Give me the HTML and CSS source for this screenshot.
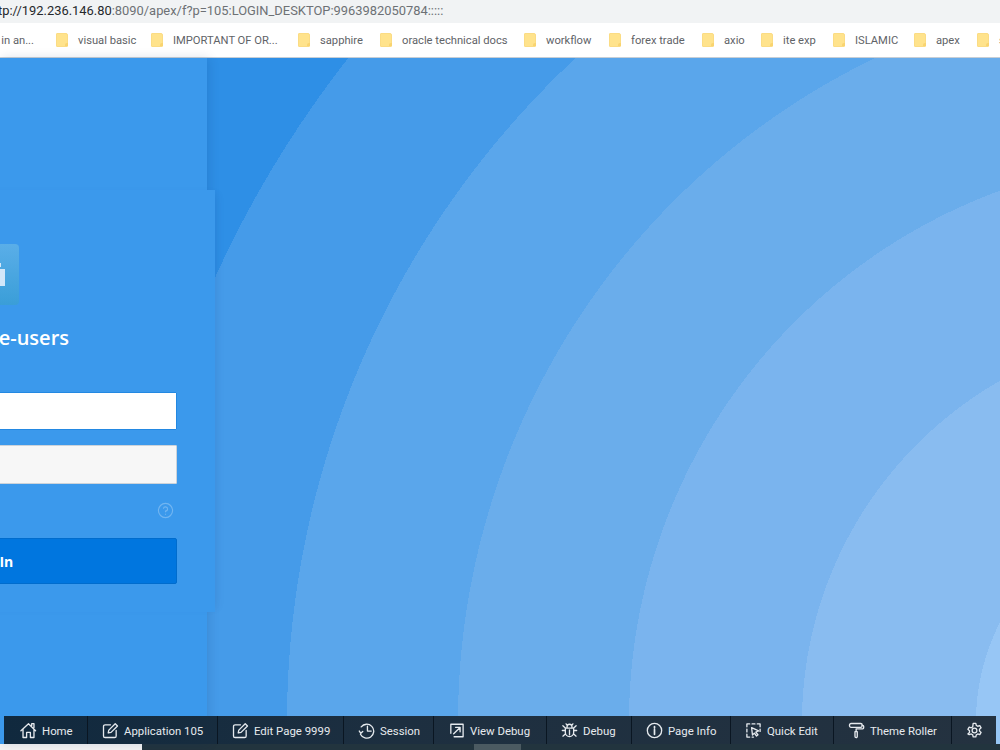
FILE: index.html
```html
<!DOCTYPE html>
<html lang="en">
<head>
<meta charset="utf-8">
<title>Login</title>
<link rel="stylesheet" href="styles.css">
</head>
<body>
<div class="window">
  <div class="address"><span class="addr-text"><span class="host">tp://192.236.146.80</span>:8090/apex/f?p=105:LOGIN_DESKTOP:9963982050784:::::</span></div>
  <nav class="bookmarks">
    <a class="bm bm-first"><span class="bm-label">in an...</span></a>
    <a class="bm"><span class="folder"></span><span class="bm-label">visual basic</span></a>
    <a class="bm"><span class="folder"></span><span class="bm-label">IMPORTANT OF OR...</span></a>
    <a class="bm"><span class="folder"></span><span class="bm-label">sapphire</span></a>
    <a class="bm"><span class="folder"></span><span class="bm-label">oracle technical docs</span></a>
    <a class="bm"><span class="folder"></span><span class="bm-label">workflow</span></a>
    <a class="bm"><span class="folder"></span><span class="bm-label">forex trade</span></a>
    <a class="bm"><span class="folder"></span><span class="bm-label">axio</span></a>
    <a class="bm"><span class="folder"></span><span class="bm-label">ite exp</span></a>
    <a class="bm"><span class="folder"></span><span class="bm-label">ISLAMIC</span></a>
    <a class="bm"><span class="folder"></span><span class="bm-label">apex</span></a>
    <a class="bm"><span class="folder"></span><span class="bm-label">s</span></a>
  </nav>
  <main class="stage">
    <section class="panel">
      <form class="card">
        <div class="tile">
          <svg class="tile-icon" viewBox="0 0 44 24"><path d="M30 0h2v4h-2zM34 0h2v4h-2zM24 6h16v17H24z"/></svg>
        </div>
        <h1 class="title">e-users</h1>
        <input class="field field-active" type="text" aria-label="Username">
        <input class="field field-idle" type="password" aria-label="Password">
        <div class="help-row">
          <svg class="help" viewBox="0 0 18 18"><circle cx="9" cy="9" r="7.5"/><path d="M6.800 7.200A2.200 2.200 0 1 1 9 9.600V10.800M9 12.400V13.600"/></svg>
        </div>
        <button class="signin" type="button">Sign In</button>
      </form>
    </section>
    <div class="devbar">
      <a class="dev">
        <svg class="ico" viewBox="0 0 18 18"><path d="M1 9.200 9 1.800l7.500 7.400M3.200 7.600V16.400H7V11h4v5.400h3.800V7.600M12.400 3.600V1.800h2.400v4"/></svg>
        <span>Home</span></a>
      <a class="dev">
        <svg class="ico" viewBox="0 0 18 18"><path d="M9 3H3.200A1.600 1.600 0 0 0 1.600 4.600v10.200a1.600 1.600 0 0 0 1.600 1.600h10.200a1.600 1.600 0 0 0 1.600-1.600V9M6.600 11.600l.6-3 6.800-6.800 2.400 2.400-6.800 6.800z"/></svg>
        <span>Application 105</span></a>
      <a class="dev">
        <svg class="ico" viewBox="0 0 18 18"><path d="M9 3H3.200A1.600 1.600 0 0 0 1.600 4.600v10.200a1.600 1.600 0 0 0 1.600 1.600h10.200a1.600 1.600 0 0 0 1.600-1.600V9M6.600 11.600l.6-3 6.800-6.800 2.400 2.400-6.800 6.800z"/></svg>
        <span>Edit Page 9999</span></a>
      <a class="dev">
        <svg class="ico" viewBox="0 0 18 18"><path d="M3.400 5.200A7.400 7.400 0 1 1 2.600 13M1.400 9.600l1.600 2.400 2-2M10 4.400v5.200H14"/></svg>
        <span>Session</span></a>
      <a class="dev">
        <svg class="ico" viewBox="0 0 18 18"><path d="M3 12V2.400h13v13.200H6.500M6 12.500 12.500 6M8 5.600h4.800v4.800"/></svg>
        <span>View Debug</span></a>
      <a class="dev">
        <svg class="ico" viewBox="0 0 18 18"><path d="M5.400 6.400h7.200a.8.800 0 0 1 .8.800V11a4.400 4.400 0 0 1-8.800 0V7.200a.8.800 0 0 1 .8-.8zM6.400 6.400V5a2.600 2.600 0 0 1 5.200 0v1.400M9 8.500v5M4.600 9H1.400M13.400 9h3.200M4.800 6.600 2 4M13.200 6.600 16 4M4.800 12.400 2 15M13.200 12.400 16 15M5.400 2l1.400 1.800M12.600 2l-1.400 1.800"/></svg>
        <span>Debug</span></a>
      <a class="dev">
        <svg class="ico" viewBox="0 0 18 18"><circle cx="9" cy="9" r="7.600"/><path class="thick" d="M9 8v5M9 4.800v1.600"/></svg>
        <span>Page Info</span></a>
      <a class="dev">
        <svg class="ico" viewBox="0 0 18 18"><path d="M5 2H2v3M2 7.500v3M2 13v3h3M7.500 2h3M13 2h3v3M16 7.500V10M7.500 16H9"/><path d="M7 6l7.400 3.400-3 1.200 2.400 3-1.600 1.200-2.300-3-2 2z"/></svg>
        <span>Quick Edit</span></a>
      <a class="dev">
        <svg class="ico" viewBox="0 0 18 18"><rect x="1.600" y="1.600" width="13.400" height="4" rx="1.600"/><path d="M15 3.600h.6a1 1 0 0 1 1 1v1.600a1 1 0 0 1-1 1H8.600v3M7.400 10.200h2.400v5.200a1.200 1.200 0 0 1-2.400 0z"/></svg>
        <span>Theme Roller</span></a>
      <a class="dev">
        <svg class="ico" viewBox="0 0 18 18"><circle cx="9" cy="9" r="2.500"/><path d="M7.600 1.400h2.800l.5 2.200 1.500.9 2.200-.7 1.400 2.400-1.700 1.500v1.800l1.700 1.500-1.400 2.400-2.200-.7-1.500.9-.5 2.200H7.600l-.5-2.200-1.500-.9-2.200.7L2 12.600l1.700-1.500V9.300L2 7.800l1.400-2.400 2.200.7 1.500-.9z"/></svg>
      </a>
    </div>
  </main>
  <div class="taskbar"><span class="task-white"></span><span class="task-grey"></span></div>
</div>
</body>
</html>
```
FILE: styles.css
```css
* { box-sizing: border-box; }
html, body { margin: 0; height: 100%; overflow: hidden; }
body { font-family: "Open Sans", "Liberation Sans", sans-serif; }

.window { width: 1000px; height: 750px; display: flex; flex-direction: column; overflow: hidden; }

.address {
  height: 23px; flex: none; padding-top: 1px; background: #f1f3f4; color: #6d7175;
  font: 12.9px/20px Roboto, sans-serif; white-space: nowrap; overflow: hidden;
}
.addr-text { display: block; margin-left: -2px; }
.host { color: #25282b; }

.bookmarks {
  height: 35px; flex: none; background: #fff; border-bottom: 1px solid #c7ced5;
  display: grid; align-items: center;
  grid-template-columns: 56px 95px 147px 82px 144px 85px 93px 59px 72px 81px 63px 30px;
  font: 11.2px/16px Roboto, sans-serif; color: #5f6367; overflow: hidden;
}
.bm { display: flex; align-items: center; gap: 10px; white-space: nowrap; min-width: 0; }
.bm-label { padding-top: 2px; }
.bm-first { width: 34px; justify-content: flex-end; }
.bm-first .bm-label { flex: none; }
.folder {
  position: relative; width: 12px; height: 14px; flex: none;
  background: #ffe38c; border: 1px solid #fbdc84; border-radius: 1px 2px 1px 1px;
}
.folder::after {
  content: ""; position: absolute; right: -1px; bottom: 0; width: 3px; height: 3px;
  border-radius: 2px 0 0 0; background: #f9d470;
}

.stage {
  flex: 1; position: relative; min-height: 0;
  background: radial-gradient(circle at 1195px 664px,
    #97c6f5 0 219px, #89bcf0 219px 393px, #7ab4ee 393px 566px,
    #6aadeb 566px 737px, #5aa6eb 737px 908px, #459be9 908px 1076px, #2e8fe6 1076px);
}
.panel {
  width: 207px; height: 100%; background: #3b99ec;
  display: flex; flex-direction: column; justify-content: center;
  box-shadow: 2px 0 10px rgba(0, 40, 90, .14);
}
.card {
  width: 450px; margin-left: -235px; height: 422px; flex: none;
  padding: 54px 38px 0; background: #3b99ec;
  display: flex; flex-direction: column; align-items: center;
  box-shadow: 6px 0 8px -4px rgba(0, 40, 90, .08);
}
.tile {
  width: 64px; height: 61px; flex: none; border-radius: 4px; margin-left: -6px;
  background: linear-gradient(#5aaee8, #3a9ed8);
  display: flex; align-items: center; justify-content: center;
}
.tile-icon { width: 44px; height: 24px; fill: #d2e7f9; }
.title {
  align-self: flex-end; margin: 18px 108px 0 0; height: 30px;
  font-size: 20px; line-height: 30px; font-weight: 600; color: #fff;
}
.field { width: 100%; flex: none; padding: 0 8px; border-radius: 1px; outline: none; }
.field-active { height: 38px; margin-top: 39px; background: #fff; border: 1px solid #2388e2; }
.field-idle { height: 39px; margin-top: 15px; background: #f7f7f7; border: 1px solid #ccd3da; }
.help-row { width: 100%; margin-top: 18px; height: 16px; display: flex; justify-content: flex-end; padding-right: 3px; }
.help { width: 17px; height: 17px; fill: none; stroke: rgba(255, 255, 255, .28); stroke-width: 1.2; }
.signin {
  width: 100%; height: 46px; margin-top: 20px; flex: none;
  background: #0076df; border: 1px solid #006ccd; border-radius: 2px;
  color: #fff; font: 700 14px "Open Sans", sans-serif;
}

.devbar {
  position: absolute; left: 4px; right: 4px; bottom: 0; height: 28px;
  display: grid;
  grid-template-columns: 84px 130px 126px 90px 113px 85px 99px 103px 118px 1fr;
  background: linear-gradient(to right, #10293e, #1d2f40 40%, #243240);
  color: #e6eaee; font: 11.4px/16px Roboto, sans-serif;
}
.dev {
  display: flex; align-items: center; gap: 5px; padding: 2px 0 0 14px;
  border-right: 1px solid #0a1622; white-space: nowrap;
}
.dev:first-child { padding-left: 16px; }
.dev:last-child { border-right: 0; }
.ico { width: 17px; height: 17px; flex: none; margin-top: -2px; fill: none; stroke: #e6eaee; stroke-width: 1.4; stroke-linejoin: round; stroke-linecap: round; }
.thick { stroke-width: 1.8; }

.taskbar { height: 6px; flex: none; background: #22343e; display: flex; }
.task-white { width: 142px; background: #f3f3f3; }
.task-grey { width: 47px; margin-left: 332px; background: #4b5a61; }
```
